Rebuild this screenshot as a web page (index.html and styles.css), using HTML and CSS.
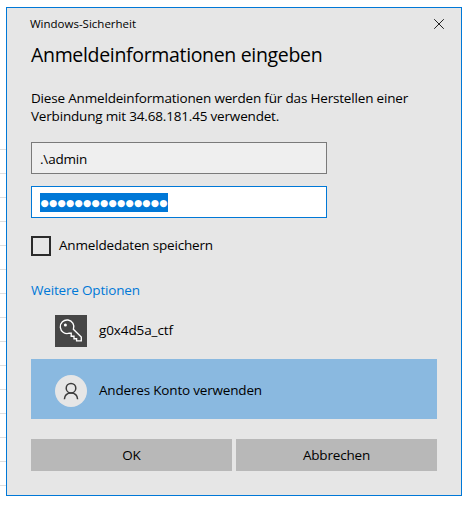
FILE: index.html
```html
<!DOCTYPE html>
<html lang="de">
<head>
<meta charset="utf-8">
<title>Windows-Sicherheit</title>
<link rel="stylesheet" href="styles.css">
</head>
<body>
<main class="dialog">
  <header class="titlebar">
    <span class="caption">Windows-Sicherheit</span>
    <svg class="close" width="10" height="10" viewBox="0 0 10 10"><path d="M.2.2l9.6 9.6M9.8.2L.2 9.8" fill="none" stroke="#222" stroke-width="1"/></svg>
  </header>
  <h1 class="heading">Anmeldeinformationen eingeben</h1>
  <p class="message">Diese Anmeldeinformationen werden für das Herstellen einer<br>Verbindung mit 34.68.181.45 verwendet.</p>
  <div class="field">.\admin</div>
  <div class="field active"><span class="selection">●●●●●●●●●●●●●●●</span></div>
  <label class="remember"><span class="box"></span><span class="save">Anmeldedaten speichern</span></label>
  <div class="more">Weitere Optionen</div>
  <div class="account">
    <svg class="tile" width="32" height="32" viewBox="0 0 32 32" fill="none">
      <rect width="32" height="32" fill="#464646"/>
      <path d="M18.4 14.3A6.8 6.8 0 1 0 14.300 18.200L16.200 18.200V21.200H19V23.700H21.600V25.800H26.300V22.100Z" stroke="#fff" stroke-width="1.350"/>
      <circle cx="10.400" cy="10" r="1.500" fill="#fff"/>
    </svg>
    <span class="ctf">g0x4d5a_ctf</span>
  </div>
  <div class="account selected">
    <svg class="tile" width="32" height="32" viewBox="0 0 32 32" fill="none">
      <circle cx="16" cy="16" r="16" fill="#e6e6e6"/>
      <g stroke="#3c3c3c" stroke-width="1.500"><circle cx="16" cy="13.200" r="4.800"/><path d="M9.400 24.200C9.700 20.400 12.400 18 16 18s6.300 2.400 6.600 6.200"/></g>
    </svg>
    <span>Anderes Konto verwenden</span>
  </div>
  <footer class="actions">
    <div class="button">OK</div>
    <div class="button">Abbrechen</div>
  </footer>
</main>
</body>
</html>
```

FILE: styles.css
```css
* { box-sizing: border-box; }
body {
  margin: 0;
  height: 510px;
  padding: 7px 0 0 6px;
  overflow: hidden;
  background: repeating-linear-gradient(#dedede 0 1px, transparent 1px 24px) 0 149px / 6px 337px no-repeat #fff;
  font: 13.500px/18px "Open Sans", "Noto Sans", sans-serif;
  letter-spacing: -0.180px;
  color: #000;
}
.dialog {
  width: 456px;
  height: 489px;
  padding: 0 24px;
  border: 1px solid #0078d7;
  background: #e6e6e6;
  display: flex;
  flex-direction: column;
  white-space: nowrap;
}
.titlebar {
  height: 32px;
  margin-right: -7px;
  display: flex;
  align-items: center;
  justify-content: space-between;
}
.caption { font-size: 11.500px; margin-left: -1px; letter-spacing: 0; }
.heading { margin: 0; height: 32px; font-weight: 400; font-size: 19.500px; line-height: 30px; letter-spacing: -0.330px; }
.message { margin: 17px 0; height: 36px; }
.field {
  flex: none;
  width: 296px;
  height: 32px;
  padding: 1px 0 0 8px;
  margin-bottom: 12px;
  border: 1px solid #7a7a7a;
  background: #efefef;
  display: flex;
  align-items: center;
}
.active { border-color: #0078d7; background: #fff; margin-bottom: 18px; }
.selection {
  width: 128px;
  height: 19px;
  padding-left: 0.500px;
  background: #0078d7;
  color: #fff;
  font: 9.500px/22px "DejaVu Sans", sans-serif;
  letter-spacing: 0.200px;
  text-rendering: geometricPrecision;
}
.remember { display: flex; align-items: center; gap: 8px; height: 20px; }
.save { margin-top: -2px; }
.box { width: 20px; height: 20px; border: 2px solid #2b2b2b; }
.more { margin-top: 25px; height: 18px; color: #0078d7; }
.account { height: 60px; padding: 4px 24px 0; display: flex; align-items: center; gap: 12px; }
.account span { margin-top: -2px; }
.ctf { letter-spacing: -0.100px; }
.selected { background: #8ab9e0; }
.actions { margin-top: 20px; display: grid; grid-template-columns: 1fr 1fr; gap: 4px; }
.button { height: 32px; background: #b8b8b8; display: flex; align-items: center; justify-content: center; }
```
